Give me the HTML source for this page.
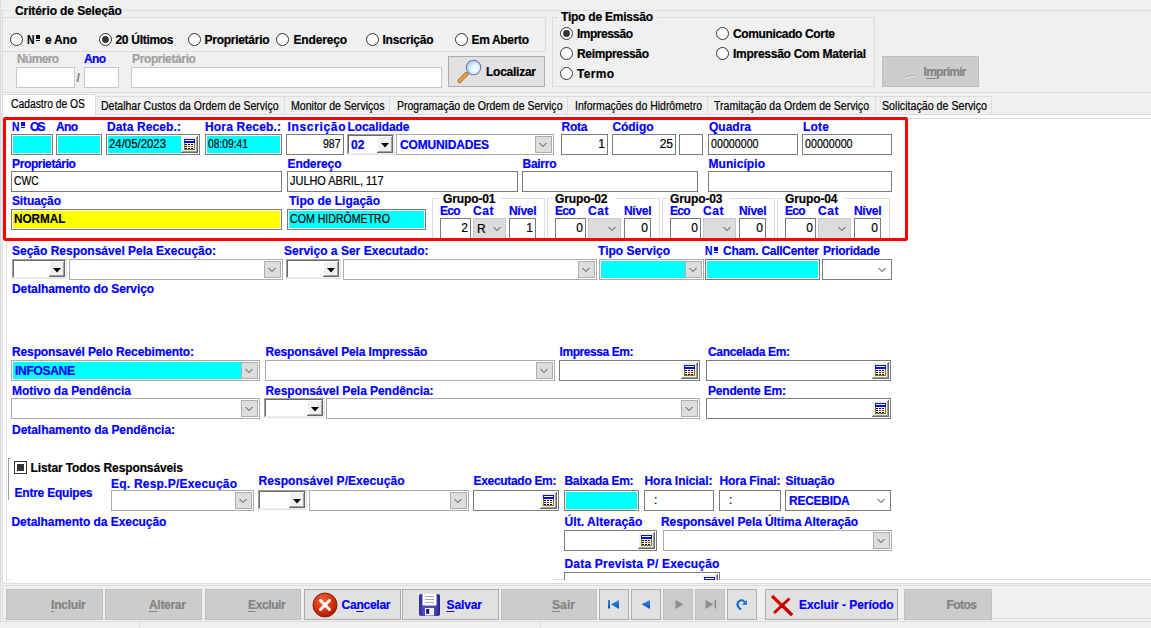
<!DOCTYPE html>
<html><head><meta charset="utf-8"><style>
html,body{margin:0;padding:0;width:1151px;height:628px;overflow:hidden;background:#f0f0f0;}
.a{position:absolute;}
.t{white-space:pre;font-family:"Liberation Sans",sans-serif;-webkit-text-stroke:0.2px currentColor;}
u{text-decoration:underline;text-decoration-thickness:1px;text-underline-offset:1.5px;}
</style></head><body>
<div class="a" style="left:0px;top:0px;width:1151px;height:628px;background:#f0f0f0;"></div>
<div class="a" style="left:0px;top:0px;width:1px;height:622px;background:#dadada;"></div>
<div class="a" style="left:2px;top:10px;width:8px;height:1px;background:#dcdcdc;"></div>
<div class="a" style="left:124px;top:10px;width:1027px;height:1px;background:#dcdcdc;"></div>
<div class="a" style="left:2px;top:10px;width:1px;height:83px;background:#dcdcdc;"></div>
<div class="a" style="left:2px;top:92px;width:1149px;height:1px;background:#dcdcdc;"></div>
<div class="a t" style="left:15px;top:5.03px;font:bold 12px 'Liberation Sans';line-height:12px;color:#000;letter-spacing:-0.1px;">Critério de Seleção</div>
<div class="a" style="left:2px;top:17px;width:544px;height:1px;background:#dcdcdc;"></div>
<div class="a" style="left:545px;top:17px;width:1px;height:35px;background:#dcdcdc;"></div>
<div class="a" style="left:2px;top:51px;width:544px;height:1px;background:#dcdcdc;"></div>
<svg class="a" style="left:10px;top:33px" width="13" height="13" viewBox="0 0 13 13"><circle cx="6.5" cy="6.5" r="6" fill="#fff" stroke="#333" stroke-width="1"/></svg>
<div class="a t" style="left:26.5px;top:34.03px;font:bold 12px 'Liberation Sans';line-height:12px;color:#000;transform:scaleX(0.8649);transform-origin:0 0;">N</div>
<div class="a" style="left:36px;top:35px;width:4px;height:4px;background:#000;"></div>
<div class="a" style="left:36px;top:40px;width:4px;height:1px;background:#000;"></div>
<div class="a t" style="left:45px;top:34.03px;font:bold 12px 'Liberation Sans';line-height:12px;color:#000;letter-spacing:-0.22px;">e Ano</div>
<svg class="a" style="left:99px;top:33px" width="13" height="13" viewBox="0 0 13 13"><circle cx="6.5" cy="6.5" r="6" fill="#fff" stroke="#333" stroke-width="1"/><circle cx="6.5" cy="6.5" r="3.4" fill="#333"/></svg>
<div class="a t" style="left:115.5px;top:34.03px;font:bold 12px 'Liberation Sans';line-height:12px;color:#000;letter-spacing:-0.3px;">20 Últimos</div>
<svg class="a" style="left:187.5px;top:33px" width="13" height="13" viewBox="0 0 13 13"><circle cx="6.5" cy="6.5" r="6" fill="#fff" stroke="#333" stroke-width="1"/></svg>
<div class="a t" style="left:204.5px;top:34.03px;font:bold 12px 'Liberation Sans';line-height:12px;color:#000;letter-spacing:-0.27px;">Proprietário</div>
<svg class="a" style="left:276px;top:33px" width="13" height="13" viewBox="0 0 13 13"><circle cx="6.5" cy="6.5" r="6" fill="#fff" stroke="#333" stroke-width="1"/></svg>
<div class="a t" style="left:293.5px;top:34.03px;font:bold 12px 'Liberation Sans';line-height:12px;color:#000;letter-spacing:-0.17px;">Endereço</div>
<svg class="a" style="left:366px;top:33px" width="13" height="13" viewBox="0 0 13 13"><circle cx="6.5" cy="6.5" r="6" fill="#fff" stroke="#333" stroke-width="1"/></svg>
<div class="a t" style="left:382.5px;top:34.03px;font:bold 12px 'Liberation Sans';line-height:12px;color:#000;letter-spacing:-0.21px;">Inscrição</div>
<svg class="a" style="left:455px;top:33px" width="13" height="13" viewBox="0 0 13 13"><circle cx="6.5" cy="6.5" r="6" fill="#fff" stroke="#333" stroke-width="1"/></svg>
<div class="a t" style="left:471.5px;top:34.03px;font:bold 12px 'Liberation Sans';line-height:12px;color:#000;letter-spacing:-0.34px;">Em Aberto</div>
<div class="a t" style="left:17px;top:53.03px;font:bold 12px 'Liberation Sans';line-height:12px;color:#a0a0a0;letter-spacing:-0.67px;">Número</div>
<div class="a t" style="left:84px;top:53.03px;font:bold 12px 'Liberation Sans';line-height:12px;color:#0000ff;letter-spacing:-0.66px;">Ano</div>
<div class="a t" style="left:132px;top:53.03px;font:bold 12px 'Liberation Sans';line-height:12px;color:#a0a0a0;letter-spacing:-0.37px;">Proprietário</div>
<div class="a" style="left:16px;top:67px;width:59px;height:21px;background:#c8c8c8;"></div>
<div class="a" style="left:17px;top:68px;width:57px;height:19px;background:#fff;"></div>
<div class="a" style="left:18px;top:69px;width:55px;height:17px;background:#fff;"></div>
<div class="a" style="left:84px;top:67px;width:35px;height:21px;background:#c8c8c8;"></div>
<div class="a" style="left:85px;top:68px;width:33px;height:19px;background:#fff;"></div>
<div class="a" style="left:86px;top:69px;width:31px;height:17px;background:#fff;"></div>
<div class="a" style="left:131px;top:67px;width:311px;height:21px;background:#c8c8c8;"></div>
<div class="a" style="left:132px;top:68px;width:309px;height:19px;background:#fff;"></div>
<div class="a" style="left:133px;top:69px;width:307px;height:17px;background:#fff;"></div>
<div class="a t" style="left:76.5px;top:71.53px;font:bold 12px 'Liberation Sans';line-height:12px;color:#808080;">/</div>
<div class="a" style="left:448px;top:56px;width:97px;height:31px;background:#adadad;"></div>
<div class="a" style="left:449px;top:57px;width:95px;height:29px;background:#e1e1e1;"></div>
<svg class="a" style="left:456px;top:59px" width="28" height="26" viewBox="0 0 28 26">
<defs><radialGradient id="lens" cx="0.62" cy="0.6" r="0.75"><stop offset="0" stop-color="#ffffff"/><stop offset="0.45" stop-color="#d8f0ff"/><stop offset="1" stop-color="#88c0f0"/></radialGradient></defs>
<path d="M3.5 22 L10.5 15" stroke="#8a6a50" stroke-width="4.2" stroke-linecap="round"/>
<path d="M3.5 22 L10.5 15" stroke="#f0a030" stroke-width="2.8" stroke-linecap="round"/>
<circle cx="17.5" cy="8.5" r="7.2" fill="url(#lens)" stroke="#7878b8" stroke-width="1.1"/>
</svg>
<div class="a t" style="left:486px;top:66.03px;font:bold 12px 'Liberation Sans';line-height:12px;color:#000;letter-spacing:-0.25px;">Localizar</div>
<div class="a" style="left:552px;top:17px;width:6px;height:1px;background:#dcdcdc;"></div>
<div class="a" style="left:657px;top:17px;width:218px;height:1px;background:#dcdcdc;"></div>
<div class="a" style="left:552px;top:17px;width:1px;height:70px;background:#dcdcdc;"></div>
<div class="a" style="left:874px;top:17px;width:1px;height:70px;background:#dcdcdc;"></div>
<div class="a" style="left:552px;top:86px;width:323px;height:1px;background:#dcdcdc;"></div>
<div class="a t" style="left:561px;top:11.03px;font:bold 12px 'Liberation Sans';line-height:12px;color:#000;letter-spacing:-0.22px;">Tipo de Emissão</div>
<svg class="a" style="left:560px;top:27.2px" width="13" height="13" viewBox="0 0 13 13"><circle cx="6.5" cy="6.5" r="6" fill="#fff" stroke="#333" stroke-width="1"/><circle cx="6.5" cy="6.5" r="3.4" fill="#333"/></svg>
<div class="a t" style="left:577px;top:28.03px;font:bold 12px 'Liberation Sans';line-height:12px;color:#000;letter-spacing:-0.5px;">Impressão</div>
<svg class="a" style="left:560px;top:47.2px" width="13" height="13" viewBox="0 0 13 13"><circle cx="6.5" cy="6.5" r="6" fill="#fff" stroke="#333" stroke-width="1"/></svg>
<div class="a t" style="left:577px;top:48.03px;font:bold 12px 'Liberation Sans';line-height:12px;color:#000;letter-spacing:-0.34px;">Reimpressão</div>
<svg class="a" style="left:560px;top:67px" width="13" height="13" viewBox="0 0 13 13"><circle cx="6.5" cy="6.5" r="6" fill="#fff" stroke="#333" stroke-width="1"/></svg>
<div class="a t" style="left:577px;top:68.03px;font:bold 12px 'Liberation Sans';line-height:12px;color:#000;letter-spacing:0.3px;">Termo</div>
<svg class="a" style="left:716px;top:27.2px" width="13" height="13" viewBox="0 0 13 13"><circle cx="6.5" cy="6.5" r="6" fill="#fff" stroke="#333" stroke-width="1"/></svg>
<div class="a t" style="left:733px;top:28.03px;font:bold 12px 'Liberation Sans';line-height:12px;color:#000;letter-spacing:-0.36px;">Comunicado Corte</div>
<svg class="a" style="left:716px;top:47.2px" width="13" height="13" viewBox="0 0 13 13"><circle cx="6.5" cy="6.5" r="6" fill="#fff" stroke="#333" stroke-width="1"/></svg>
<div class="a t" style="left:733px;top:48.03px;font:bold 12px 'Liberation Sans';line-height:12px;color:#000;letter-spacing:-0.27px;">Impressão Com Material</div>
<div class="a" style="left:882px;top:56px;width:97px;height:31px;background:#bfbfbf;"></div>
<div class="a" style="left:883px;top:57px;width:95px;height:29px;background:#cccccc;"></div>
<svg class="a" style="left:905px;top:75px" width="10" height="4" viewBox="0 0 10 4"><path d="M0 3 L9 1" stroke="#fff" stroke-width="1.2"/><path d="M0 2.2 L9 0.2" stroke="#9a9a9a" stroke-width="0.8"/></svg>
<div class="a t" style="left:923.5px;top:66.03px;font:bold 12px 'Liberation Sans';line-height:12px;color:#838383;letter-spacing:-0.72px;">I<u>m</u>primir</div>
<div class="a" style="left:0px;top:114px;width:1151px;height:1px;background:#dcdcdc;"></div>
<div class="a" style="left:95px;top:96px;width:190px;height:19px;background:#dcdcdc;"></div>
<div class="a" style="left:96px;top:97px;width:188px;height:17px;background:#f0f0f0;"></div>
<div class="a t" style="left:100.5px;top:100.03px;font:12px 'Liberation Sans';line-height:12px;color:#000;transform:scaleX(0.8754);transform-origin:0 0;">Detalhar Custos da Ordem de Serviço</div>
<div class="a" style="left:284px;top:96px;width:106px;height:19px;background:#dcdcdc;"></div>
<div class="a" style="left:285px;top:97px;width:104px;height:17px;background:#f0f0f0;"></div>
<div class="a t" style="left:290.5px;top:100.03px;font:12px 'Liberation Sans';line-height:12px;color:#000;transform:scaleX(0.8817);transform-origin:0 0;">Monitor de Serviços</div>
<div class="a" style="left:389px;top:96px;width:179px;height:19px;background:#dcdcdc;"></div>
<div class="a" style="left:390px;top:97px;width:177px;height:17px;background:#f0f0f0;"></div>
<div class="a t" style="left:396.5px;top:100.03px;font:12px 'Liberation Sans';line-height:12px;color:#000;transform:scaleX(0.8767);transform-origin:0 0;">Programação de Ordem de Serviço</div>
<div class="a" style="left:567px;top:96px;width:141px;height:19px;background:#dcdcdc;"></div>
<div class="a" style="left:568px;top:97px;width:139px;height:17px;background:#f0f0f0;"></div>
<div class="a t" style="left:574.5px;top:100.03px;font:12px 'Liberation Sans';line-height:12px;color:#000;transform:scaleX(0.8734);transform-origin:0 0;">Informações do Hidrômetro</div>
<div class="a" style="left:707px;top:96px;width:169px;height:19px;background:#dcdcdc;"></div>
<div class="a" style="left:708px;top:97px;width:167px;height:17px;background:#f0f0f0;"></div>
<div class="a t" style="left:714px;top:100.03px;font:12px 'Liberation Sans';line-height:12px;color:#000;transform:scaleX(0.8792);transform-origin:0 0;">Tramitação da Ordem de Serviço</div>
<div class="a" style="left:875px;top:96px;width:117px;height:19px;background:#dcdcdc;"></div>
<div class="a" style="left:876px;top:97px;width:115px;height:17px;background:#f0f0f0;"></div>
<div class="a t" style="left:881.5px;top:100.03px;font:12px 'Liberation Sans';line-height:12px;color:#000;transform:scaleX(0.8894);transform-origin:0 0;">Solicitação de Serviço</div>
<div class="a" style="left:2px;top:114px;width:1149px;height:470px;background:#dcdcdc;"></div>
<div class="a" style="left:3px;top:115px;width:1148px;height:468px;background:#fff;"></div>
<div class="a" style="left:3px;top:118px;width:1148px;height:1px;background:#dcdcdc;"></div>
<div class="a" style="left:2px;top:94px;width:94px;height:22px;background:#dcdcdc;"></div>
<div class="a" style="left:3px;top:95px;width:92px;height:23px;background:#fff;"></div>
<div class="a t" style="left:10.5px;top:97.53px;font:12px 'Liberation Sans';line-height:12px;color:#000;transform:scaleX(0.8600);transform-origin:0 0;">Cadastro de OS</div>
<div class="a" style="left:3px;top:117px;width:905px;height:124px;box-sizing:border-box;border:3px solid #ff0000;border-radius:3px;"></div>
<div class="a t" style="left:11.5px;top:121.03px;font:bold 12px 'Liberation Sans';line-height:12px;color:#0000ff;transform:scaleX(0.8649);transform-origin:0 0;">N</div>
<div class="a" style="left:21px;top:122px;width:4px;height:4px;background:#0000ff;"></div>
<div class="a" style="left:21px;top:127px;width:4px;height:1px;background:#0000ff;"></div>
<div class="a t" style="left:30px;top:121.03px;font:bold 12px 'Liberation Sans';line-height:12px;color:#0000ff;letter-spacing:-1.84px;">OS</div>
<div class="a t" style="left:56px;top:121.03px;font:bold 12px 'Liberation Sans';line-height:12px;color:#0000ff;letter-spacing:-0.66px;">Ano</div>
<div class="a t" style="left:107px;top:121.03px;font:bold 12px 'Liberation Sans';line-height:12px;color:#0000ff;letter-spacing:0.12px;">Data Receb.:</div>
<div class="a t" style="left:205px;top:121.03px;font:bold 12px 'Liberation Sans';line-height:12px;color:#0000ff;letter-spacing:0.18px;">Hora Receb.:</div>
<div class="a t" style="left:287.5px;top:121.03px;font:bold 12px 'Liberation Sans';line-height:12px;color:#0000ff;letter-spacing:0.66px;">Inscrição</div>
<div class="a t" style="left:347.5px;top:121.03px;font:bold 12px 'Liberation Sans';line-height:12px;color:#0000ff;letter-spacing:-0.08px;">Localidade</div>
<div class="a t" style="left:561.5px;top:121.03px;font:bold 12px 'Liberation Sans';line-height:12px;color:#0000ff;letter-spacing:-0.22px;">Rota</div>
<div class="a t" style="left:612.5px;top:121.03px;font:bold 12px 'Liberation Sans';line-height:12px;color:#0000ff;letter-spacing:-0.07px;">Código</div>
<div class="a t" style="left:709px;top:121.03px;font:bold 12px 'Liberation Sans';line-height:12px;color:#0000ff;">Quadra</div>
<div class="a t" style="left:803px;top:121.03px;font:bold 12px 'Liberation Sans';line-height:12px;color:#0000ff;letter-spacing:0.22px;">Lote</div>
<div class="a" style="left:11px;top:134px;width:42px;height:21px;background:#7a7a7a;"></div>
<div class="a" style="left:12px;top:135px;width:40px;height:19px;background:#fff;"></div>
<div class="a" style="left:13px;top:136px;width:38px;height:17px;background:#00ffff;"></div>
<div class="a" style="left:56px;top:134px;width:46px;height:21px;background:#7a7a7a;"></div>
<div class="a" style="left:57px;top:135px;width:44px;height:19px;background:#fff;"></div>
<div class="a" style="left:58px;top:136px;width:42px;height:17px;background:#00ffff;"></div>
<div class="a" style="left:106px;top:134px;width:94px;height:21px;background:#7a7a7a;"></div>
<div class="a" style="left:107px;top:135px;width:92px;height:19px;background:#fff;"></div>
<div class="a" style="left:108px;top:136px;width:90px;height:17px;background:#00ffff;"></div>
<div class="a t" style="left:109px;top:138.03px;font:12px 'Liberation Sans';line-height:12px;color:#000;transform:scaleX(0.9490);transform-origin:0 0;">24/05/2023</div>
<div class="a" style="left:181px;top:136px;width:17px;height:17px;background:#696969;"></div>
<div class="a" style="left:181px;top:136px;width:16px;height:16px;background:#fff;"></div>
<div class="a" style="left:182px;top:137px;width:15px;height:15px;background:#a0a0a0;"></div>
<div class="a" style="left:182px;top:137px;width:14px;height:14px;background:#f0f0f0;"></div>
<svg class="a" style="left:184px;top:139px" width="11" height="11" viewBox="0 0 11 11" shape-rendering="crispEdges">
<rect x="0" y="0" width="11" height="11" fill="#808000"/>
<rect x="0" y="0" width="11" height="4" fill="#0000ff"/>
<rect x="1" y="1" width="9" height="1" fill="#fff"/>
<rect x="1" y="4" width="9" height="6" fill="#fff"/>
<rect x="1" y="5" width="2" height="1" fill="#000"/><rect x="4" y="5" width="2" height="1" fill="#000"/><rect x="7" y="5" width="2" height="1" fill="#000"/>
<rect x="1" y="7" width="2" height="1" fill="#000"/><rect x="4" y="7" width="2" height="1" fill="#f00"/><rect x="7" y="7" width="2" height="1" fill="#f00"/>
<rect x="1" y="9" width="2" height="1" fill="#000"/><rect x="4" y="9" width="2" height="1" fill="#000"/><rect x="7" y="9" width="2" height="1" fill="#000"/>
</svg>
<div class="a" style="left:205px;top:134px;width:77px;height:21px;background:#7a7a7a;"></div>
<div class="a" style="left:206px;top:135px;width:75px;height:19px;background:#fff;"></div>
<div class="a" style="left:207px;top:136px;width:73px;height:17px;background:#00ffff;"></div>
<div class="a t" style="left:208px;top:138.03px;font:12px 'Liberation Sans';line-height:12px;color:#000;transform:scaleX(0.8562);transform-origin:0 0;">08:09:41</div>
<div class="a" style="left:286px;top:134px;width:58px;height:21px;background:#7a7a7a;"></div>
<div class="a" style="left:287px;top:135px;width:56px;height:19px;background:#fff;"></div>
<div class="a" style="left:288px;top:136px;width:54px;height:17px;background:#fff;"></div>
<div class="a t" style="left:323.4px;top:138.03px;font:12px 'Liberation Sans';line-height:12px;color:#000;transform:scaleX(0.8786);transform-origin:0 0;">987</div>
<div class="a" style="left:347px;top:134px;width:48px;height:21px;background:#e3e3e3;"></div>
<div class="a" style="left:347px;top:134px;width:47px;height:20px;background:#a0a0a0;"></div>
<div class="a" style="left:348px;top:135px;width:46px;height:19px;background:#f0f0f0;"></div>
<div class="a" style="left:348px;top:135px;width:45px;height:18px;background:#696969;"></div>
<div class="a" style="left:349px;top:136px;width:44px;height:17px;background:#fff;"></div>
<div class="a" style="left:377px;top:136px;width:16px;height:17px;background:#696969;"></div>
<div class="a" style="left:377px;top:136px;width:15px;height:16px;background:#fff;"></div>
<div class="a" style="left:378px;top:137px;width:14px;height:15px;background:#a0a0a0;"></div>
<div class="a" style="left:378px;top:137px;width:13px;height:14px;background:#f0f0f0;"></div>
<svg class="a" style="left:380.5px;top:143px" width="8" height="5" viewBox="0 0 8 5"><path d="M0 0 H8 L4 4.5 Z" fill="#000"/></svg>
<div class="a t" style="left:351px;top:139.03px;font:bold 12px 'Liberation Sans';line-height:12px;color:#0000ff;">02</div>
<div class="a" style="left:396px;top:134px;width:158px;height:21px;background:#ababab;"></div>
<div class="a" style="left:397px;top:135px;width:156px;height:19px;background:#fff;"></div>
<div class="a" style="left:398px;top:136px;width:154px;height:17px;background:#fff;"></div>
<div class="a" style="left:535px;top:136px;width:17px;height:17px;background:#adadad;"></div>
<div class="a" style="left:536px;top:137px;width:15px;height:15px;background:#dddddd;"></div>
<svg class="a" style="left:539px;top:142px" width="8" height="6" viewBox="0 0 8 6"><path d="M0.5 1 L4.0 4.5 L7.5 1" fill="none" stroke="#444" stroke-width="1"/></svg>
<div class="a t" style="left:400px;top:139.03px;font:bold 12px 'Liberation Sans';line-height:12px;color:#0000ff;letter-spacing:-0.17px;">COMUNIDADES</div>
<div class="a" style="left:561px;top:134px;width:47px;height:21px;background:#7a7a7a;"></div>
<div class="a" style="left:562px;top:135px;width:45px;height:19px;background:#fff;"></div>
<div class="a" style="left:563px;top:136px;width:43px;height:17px;background:#fff;"></div>
<div class="a t" style="left:598.31px;top:138.03px;font:12px 'Liberation Sans';line-height:12px;color:#000;">1</div>
<div class="a" style="left:612px;top:134px;width:64px;height:21px;background:#7a7a7a;"></div>
<div class="a" style="left:613px;top:135px;width:62px;height:19px;background:#fff;"></div>
<div class="a" style="left:614px;top:136px;width:60px;height:17px;background:#fff;"></div>
<div class="a t" style="left:659.64px;top:138.03px;font:12px 'Liberation Sans';line-height:12px;color:#000;">25</div>
<div class="a" style="left:679px;top:134px;width:24px;height:21px;background:#7a7a7a;"></div>
<div class="a" style="left:680px;top:135px;width:22px;height:19px;background:#fff;"></div>
<div class="a" style="left:681px;top:136px;width:20px;height:17px;background:#fff;"></div>
<div class="a" style="left:708px;top:134px;width:90px;height:21px;background:#7a7a7a;"></div>
<div class="a" style="left:709px;top:135px;width:88px;height:19px;background:#fff;"></div>
<div class="a" style="left:710px;top:136px;width:86px;height:17px;background:#fff;"></div>
<div class="a t" style="left:711px;top:138.03px;font:12px 'Liberation Sans';line-height:12px;color:#000;transform:scaleX(0.8897);transform-origin:0 0;">00000000</div>
<div class="a" style="left:802px;top:134px;width:90px;height:21px;background:#7a7a7a;"></div>
<div class="a" style="left:803px;top:135px;width:88px;height:19px;background:#fff;"></div>
<div class="a" style="left:804px;top:136px;width:86px;height:17px;background:#fff;"></div>
<div class="a t" style="left:805px;top:138.03px;font:12px 'Liberation Sans';line-height:12px;color:#000;transform:scaleX(0.8897);transform-origin:0 0;">00000000</div>
<div class="a t" style="left:12px;top:158.03px;font:bold 12px 'Liberation Sans';line-height:12px;color:#0000ff;letter-spacing:-0.37px;">Proprietário</div>
<div class="a t" style="left:287.5px;top:158.03px;font:bold 12px 'Liberation Sans';line-height:12px;color:#0000ff;letter-spacing:-0.1px;">Endereço</div>
<div class="a t" style="left:522.5px;top:158.03px;font:bold 12px 'Liberation Sans';line-height:12px;color:#0000ff;letter-spacing:-0.27px;">Bairro</div>
<div class="a t" style="left:708.5px;top:158.03px;font:bold 12px 'Liberation Sans';line-height:12px;color:#0000ff;letter-spacing:0.06px;">Município</div>
<div class="a" style="left:11px;top:171px;width:271px;height:21px;background:#7a7a7a;"></div>
<div class="a" style="left:12px;top:172px;width:269px;height:19px;background:#fff;"></div>
<div class="a" style="left:13px;top:173px;width:267px;height:17px;background:#fff;"></div>
<div class="a t" style="left:14px;top:175.03px;font:12px 'Liberation Sans';line-height:12px;color:#000;transform:scaleX(0.8632);transform-origin:0 0;">CWC</div>
<div class="a" style="left:287px;top:171px;width:231px;height:21px;background:#7a7a7a;"></div>
<div class="a" style="left:288px;top:172px;width:229px;height:19px;background:#fff;"></div>
<div class="a" style="left:289px;top:173px;width:227px;height:17px;background:#fff;"></div>
<div class="a t" style="left:290px;top:175.03px;font:12px 'Liberation Sans';line-height:12px;color:#000;transform:scaleX(0.9122);transform-origin:0 0;">JULHO ABRIL, 117</div>
<div class="a" style="left:522px;top:171px;width:176px;height:21px;background:#7a7a7a;"></div>
<div class="a" style="left:523px;top:172px;width:174px;height:19px;background:#fff;"></div>
<div class="a" style="left:524px;top:173px;width:172px;height:17px;background:#fff;"></div>
<div class="a" style="left:708px;top:171px;width:184px;height:21px;background:#7a7a7a;"></div>
<div class="a" style="left:709px;top:172px;width:182px;height:19px;background:#fff;"></div>
<div class="a" style="left:710px;top:173px;width:180px;height:17px;background:#fff;"></div>
<div class="a t" style="left:12px;top:195.03px;font:bold 12px 'Liberation Sans';line-height:12px;color:#0000ff;letter-spacing:-0.15px;">Situação</div>
<div class="a t" style="left:289px;top:195.03px;font:bold 12px 'Liberation Sans';line-height:12px;color:#0000ff;">Tipo de Ligação</div>
<div class="a" style="left:11px;top:209px;width:271px;height:21px;background:#7a7a7a;"></div>
<div class="a" style="left:12px;top:210px;width:269px;height:19px;background:#fff;"></div>
<div class="a" style="left:13px;top:211px;width:267px;height:17px;background:#ffff00;"></div>
<div class="a t" style="left:14px;top:213.03px;font:bold 12px 'Liberation Sans';line-height:12px;color:#000;transform:scaleX(0.9778);transform-origin:0 0;">NORMAL</div>
<div class="a" style="left:287px;top:209px;width:139px;height:21px;background:#7a7a7a;"></div>
<div class="a" style="left:288px;top:210px;width:137px;height:19px;background:#fff;"></div>
<div class="a" style="left:289px;top:211px;width:135px;height:17px;background:#00ffff;"></div>
<div class="a t" style="left:290px;top:213.03px;font:12px 'Liberation Sans';line-height:12px;color:#000;transform:scaleX(0.8824);transform-origin:0 0;">COM HIDRÔMETRO</div>
<div class="a" style="left:432px;top:198px;width:6px;height:1px;background:#dcdcdc;"></div>
<div class="a" style="left:500px;top:198px;width:45px;height:1px;background:#dcdcdc;"></div>
<div class="a" style="left:432px;top:198px;width:1px;height:43px;background:#dcdcdc;"></div>
<div class="a" style="left:544px;top:198px;width:1px;height:43px;background:#dcdcdc;"></div>
<div class="a" style="left:432px;top:240px;width:113px;height:1px;background:#dcdcdc;"></div>
<div class="a t" style="left:443px;top:193.03px;font:bold 12px 'Liberation Sans';line-height:12px;color:#000;letter-spacing:-0.12px;">Grupo-01</div>
<div class="a t" style="left:440px;top:205.03px;font:bold 12px 'Liberation Sans';line-height:12px;color:#0000ff;letter-spacing:-0.76px;">Eco</div>
<div class="a t" style="left:473px;top:205.03px;font:bold 12px 'Liberation Sans';line-height:12px;color:#0000ff;letter-spacing:0.58px;">Cat</div>
<div class="a t" style="left:509px;top:205.03px;font:bold 12px 'Liberation Sans';line-height:12px;color:#0000ff;letter-spacing:-0.3px;">Nível</div>
<div class="a" style="left:440px;top:218px;width:31px;height:21px;background:#7a7a7a;"></div>
<div class="a" style="left:441px;top:219px;width:29px;height:19px;background:#fff;"></div>
<div class="a" style="left:442px;top:220px;width:27px;height:17px;background:#fff;"></div>
<div class="a t" style="left:461.31px;top:222.03px;font:12px 'Liberation Sans';line-height:12px;color:#000;">2</div>
<div class="a" style="left:473px;top:218px;width:33px;height:21px;background:#c8c8c8;"></div>
<div class="a" style="left:474px;top:219px;width:31px;height:19px;background:#dcdcdc;"></div>
<div class="a" style="left:475px;top:220px;width:29px;height:17px;background:#dcdcdc;"></div>
<div class="a" style="left:487px;top:220px;width:17px;height:17px;background:#dcdcdc;"></div>
<div class="a" style="left:488px;top:221px;width:15px;height:15px;background:#dcdcdc;"></div>
<svg class="a" style="left:492.5px;top:226px" width="8" height="6" viewBox="0 0 8 6"><path d="M0.5 1 L4.0 4.5 L7.5 1" fill="none" stroke="#444" stroke-width="1"/></svg>
<div class="a t" style="left:477px;top:223.03px;font:12px 'Liberation Sans';line-height:12px;color:#000;">R</div>
<div class="a" style="left:509px;top:218px;width:27px;height:21px;background:#7a7a7a;"></div>
<div class="a" style="left:510px;top:219px;width:25px;height:19px;background:#fff;"></div>
<div class="a" style="left:511px;top:220px;width:23px;height:17px;background:#fff;"></div>
<div class="a t" style="left:526.31px;top:222.03px;font:12px 'Liberation Sans';line-height:12px;color:#000;">1</div>
<div class="a" style="left:547px;top:198px;width:6px;height:1px;background:#dcdcdc;"></div>
<div class="a" style="left:615px;top:198px;width:45px;height:1px;background:#dcdcdc;"></div>
<div class="a" style="left:547px;top:198px;width:1px;height:43px;background:#dcdcdc;"></div>
<div class="a" style="left:659px;top:198px;width:1px;height:43px;background:#dcdcdc;"></div>
<div class="a" style="left:547px;top:240px;width:113px;height:1px;background:#dcdcdc;"></div>
<div class="a t" style="left:555px;top:193.03px;font:bold 12px 'Liberation Sans';line-height:12px;color:#000;letter-spacing:-0.12px;">Grupo-02</div>
<div class="a t" style="left:555px;top:205.03px;font:bold 12px 'Liberation Sans';line-height:12px;color:#0000ff;letter-spacing:-0.76px;">Eco</div>
<div class="a t" style="left:588px;top:205.03px;font:bold 12px 'Liberation Sans';line-height:12px;color:#0000ff;letter-spacing:0.58px;">Cat</div>
<div class="a t" style="left:624px;top:205.03px;font:bold 12px 'Liberation Sans';line-height:12px;color:#0000ff;letter-spacing:-0.3px;">Nível</div>
<div class="a" style="left:555px;top:218px;width:31px;height:21px;background:#7a7a7a;"></div>
<div class="a" style="left:556px;top:219px;width:29px;height:19px;background:#fff;"></div>
<div class="a" style="left:557px;top:220px;width:27px;height:17px;background:#fff;"></div>
<div class="a t" style="left:576.31px;top:222.03px;font:12px 'Liberation Sans';line-height:12px;color:#000;">0</div>
<div class="a" style="left:588px;top:218px;width:33px;height:21px;background:#c8c8c8;"></div>
<div class="a" style="left:589px;top:219px;width:31px;height:19px;background:#dcdcdc;"></div>
<div class="a" style="left:590px;top:220px;width:29px;height:17px;background:#dcdcdc;"></div>
<div class="a" style="left:602px;top:220px;width:17px;height:17px;background:#dcdcdc;"></div>
<div class="a" style="left:603px;top:221px;width:15px;height:15px;background:#dcdcdc;"></div>
<svg class="a" style="left:607.5px;top:226px" width="8" height="6" viewBox="0 0 8 6"><path d="M0.5 1 L4.0 4.5 L7.5 1" fill="none" stroke="#444" stroke-width="1"/></svg>
<div class="a" style="left:624px;top:218px;width:27px;height:21px;background:#7a7a7a;"></div>
<div class="a" style="left:625px;top:219px;width:25px;height:19px;background:#fff;"></div>
<div class="a" style="left:626px;top:220px;width:23px;height:17px;background:#fff;"></div>
<div class="a t" style="left:641.31px;top:222.03px;font:12px 'Liberation Sans';line-height:12px;color:#000;">0</div>
<div class="a" style="left:662px;top:198px;width:6px;height:1px;background:#dcdcdc;"></div>
<div class="a" style="left:730px;top:198px;width:45px;height:1px;background:#dcdcdc;"></div>
<div class="a" style="left:662px;top:198px;width:1px;height:43px;background:#dcdcdc;"></div>
<div class="a" style="left:774px;top:198px;width:1px;height:43px;background:#dcdcdc;"></div>
<div class="a" style="left:662px;top:240px;width:113px;height:1px;background:#dcdcdc;"></div>
<div class="a t" style="left:670px;top:193.03px;font:bold 12px 'Liberation Sans';line-height:12px;color:#000;letter-spacing:-0.12px;">Grupo-03</div>
<div class="a t" style="left:670px;top:205.03px;font:bold 12px 'Liberation Sans';line-height:12px;color:#0000ff;letter-spacing:-0.76px;">Eco</div>
<div class="a t" style="left:703px;top:205.03px;font:bold 12px 'Liberation Sans';line-height:12px;color:#0000ff;letter-spacing:0.58px;">Cat</div>
<div class="a t" style="left:739px;top:205.03px;font:bold 12px 'Liberation Sans';line-height:12px;color:#0000ff;letter-spacing:-0.3px;">Nível</div>
<div class="a" style="left:670px;top:218px;width:31px;height:21px;background:#7a7a7a;"></div>
<div class="a" style="left:671px;top:219px;width:29px;height:19px;background:#fff;"></div>
<div class="a" style="left:672px;top:220px;width:27px;height:17px;background:#fff;"></div>
<div class="a t" style="left:691.31px;top:222.03px;font:12px 'Liberation Sans';line-height:12px;color:#000;">0</div>
<div class="a" style="left:703px;top:218px;width:33px;height:21px;background:#c8c8c8;"></div>
<div class="a" style="left:704px;top:219px;width:31px;height:19px;background:#dcdcdc;"></div>
<div class="a" style="left:705px;top:220px;width:29px;height:17px;background:#dcdcdc;"></div>
<div class="a" style="left:717px;top:220px;width:17px;height:17px;background:#dcdcdc;"></div>
<div class="a" style="left:718px;top:221px;width:15px;height:15px;background:#dcdcdc;"></div>
<svg class="a" style="left:722.5px;top:226px" width="8" height="6" viewBox="0 0 8 6"><path d="M0.5 1 L4.0 4.5 L7.5 1" fill="none" stroke="#444" stroke-width="1"/></svg>
<div class="a" style="left:739px;top:218px;width:27px;height:21px;background:#7a7a7a;"></div>
<div class="a" style="left:740px;top:219px;width:25px;height:19px;background:#fff;"></div>
<div class="a" style="left:741px;top:220px;width:23px;height:17px;background:#fff;"></div>
<div class="a t" style="left:756.31px;top:222.03px;font:12px 'Liberation Sans';line-height:12px;color:#000;">0</div>
<div class="a" style="left:777px;top:198px;width:6px;height:1px;background:#dcdcdc;"></div>
<div class="a" style="left:845px;top:198px;width:45px;height:1px;background:#dcdcdc;"></div>
<div class="a" style="left:777px;top:198px;width:1px;height:43px;background:#dcdcdc;"></div>
<div class="a" style="left:889px;top:198px;width:1px;height:43px;background:#dcdcdc;"></div>
<div class="a" style="left:777px;top:240px;width:113px;height:1px;background:#dcdcdc;"></div>
<div class="a t" style="left:785px;top:193.03px;font:bold 12px 'Liberation Sans';line-height:12px;color:#000;letter-spacing:-0.12px;">Grupo-04</div>
<div class="a t" style="left:785px;top:205.03px;font:bold 12px 'Liberation Sans';line-height:12px;color:#0000ff;letter-spacing:-0.76px;">Eco</div>
<div class="a t" style="left:818px;top:205.03px;font:bold 12px 'Liberation Sans';line-height:12px;color:#0000ff;letter-spacing:0.58px;">Cat</div>
<div class="a t" style="left:854px;top:205.03px;font:bold 12px 'Liberation Sans';line-height:12px;color:#0000ff;letter-spacing:-0.3px;">Nível</div>
<div class="a" style="left:785px;top:218px;width:31px;height:21px;background:#7a7a7a;"></div>
<div class="a" style="left:786px;top:219px;width:29px;height:19px;background:#fff;"></div>
<div class="a" style="left:787px;top:220px;width:27px;height:17px;background:#fff;"></div>
<div class="a t" style="left:806.31px;top:222.03px;font:12px 'Liberation Sans';line-height:12px;color:#000;">0</div>
<div class="a" style="left:818px;top:218px;width:33px;height:21px;background:#c8c8c8;"></div>
<div class="a" style="left:819px;top:219px;width:31px;height:19px;background:#dcdcdc;"></div>
<div class="a" style="left:820px;top:220px;width:29px;height:17px;background:#dcdcdc;"></div>
<div class="a" style="left:832px;top:220px;width:17px;height:17px;background:#dcdcdc;"></div>
<div class="a" style="left:833px;top:221px;width:15px;height:15px;background:#dcdcdc;"></div>
<svg class="a" style="left:837.5px;top:226px" width="8" height="6" viewBox="0 0 8 6"><path d="M0.5 1 L4.0 4.5 L7.5 1" fill="none" stroke="#444" stroke-width="1"/></svg>
<div class="a" style="left:854px;top:218px;width:27px;height:21px;background:#7a7a7a;"></div>
<div class="a" style="left:855px;top:219px;width:25px;height:19px;background:#fff;"></div>
<div class="a" style="left:856px;top:220px;width:23px;height:17px;background:#fff;"></div>
<div class="a t" style="left:871.31px;top:222.03px;font:12px 'Liberation Sans';line-height:12px;color:#000;">0</div>
<div class="a" style="left:3px;top:241px;width:1148px;height:5px;background:#fff;"></div>
<div class="a" style="left:3px;top:117px;width:905px;height:124px;box-sizing:border-box;border:3px solid #ff0000;border-radius:3px;"></div>
<div class="a t" style="left:12px;top:245.03px;font:bold 12px 'Liberation Sans';line-height:12px;color:#0000ff;">Seção Responsável Pela Execução:</div>
<div class="a t" style="left:284px;top:245.03px;font:bold 12px 'Liberation Sans';line-height:12px;color:#0000ff;letter-spacing:0.02px;">Serviço a Ser Executado:</div>
<div class="a t" style="left:598px;top:245.03px;font:bold 12px 'Liberation Sans';line-height:12px;color:#0000ff;letter-spacing:0.02px;">Tipo Serviço</div>
<div class="a t" style="left:704.5px;top:245.03px;font:bold 12px 'Liberation Sans';line-height:12px;color:#0000ff;transform:scaleX(0.8649);transform-origin:0 0;">N</div>
<div class="a" style="left:714px;top:247px;width:4px;height:4px;background:#0000ff;"></div>
<div class="a" style="left:714px;top:252px;width:4px;height:1px;background:#0000ff;"></div>
<div class="a t" style="left:723px;top:245.03px;font:bold 12px 'Liberation Sans';line-height:12px;color:#0000ff;letter-spacing:-0.27px;">Cham. CallCenter</div>
<div class="a t" style="left:823px;top:245.03px;font:bold 12px 'Liberation Sans';line-height:12px;color:#0000ff;letter-spacing:-0.26px;">Prioridade</div>
<div class="a" style="left:12px;top:259px;width:55px;height:20px;background:#e3e3e3;"></div>
<div class="a" style="left:12px;top:259px;width:54px;height:19px;background:#a0a0a0;"></div>
<div class="a" style="left:13px;top:260px;width:53px;height:18px;background:#f0f0f0;"></div>
<div class="a" style="left:13px;top:260px;width:52px;height:17px;background:#696969;"></div>
<div class="a" style="left:14px;top:261px;width:51px;height:16px;background:#fff;"></div>
<div class="a" style="left:49px;top:261px;width:16px;height:16px;background:#696969;"></div>
<div class="a" style="left:49px;top:261px;width:15px;height:15px;background:#fff;"></div>
<div class="a" style="left:50px;top:262px;width:14px;height:14px;background:#a0a0a0;"></div>
<div class="a" style="left:50px;top:262px;width:13px;height:13px;background:#f0f0f0;"></div>
<svg class="a" style="left:52.5px;top:268px" width="8" height="5" viewBox="0 0 8 5"><path d="M0 0 H8 L4 4.5 Z" fill="#000"/></svg>
<div class="a" style="left:69px;top:259px;width:214px;height:21px;background:#ababab;"></div>
<div class="a" style="left:70px;top:260px;width:212px;height:19px;background:#fff;"></div>
<div class="a" style="left:71px;top:261px;width:210px;height:17px;background:#fff;"></div>
<div class="a" style="left:264px;top:261px;width:17px;height:17px;background:#adadad;"></div>
<div class="a" style="left:265px;top:262px;width:15px;height:15px;background:#dddddd;"></div>
<svg class="a" style="left:268px;top:267px" width="8" height="6" viewBox="0 0 8 6"><path d="M0.5 1 L4.0 4.5 L7.5 1" fill="none" stroke="#444" stroke-width="1"/></svg>
<div class="a" style="left:286px;top:259px;width:55px;height:20px;background:#e3e3e3;"></div>
<div class="a" style="left:286px;top:259px;width:54px;height:19px;background:#a0a0a0;"></div>
<div class="a" style="left:287px;top:260px;width:53px;height:18px;background:#f0f0f0;"></div>
<div class="a" style="left:287px;top:260px;width:52px;height:17px;background:#696969;"></div>
<div class="a" style="left:288px;top:261px;width:51px;height:16px;background:#fff;"></div>
<div class="a" style="left:323px;top:261px;width:16px;height:16px;background:#696969;"></div>
<div class="a" style="left:323px;top:261px;width:15px;height:15px;background:#fff;"></div>
<div class="a" style="left:324px;top:262px;width:14px;height:14px;background:#a0a0a0;"></div>
<div class="a" style="left:324px;top:262px;width:13px;height:13px;background:#f0f0f0;"></div>
<svg class="a" style="left:326.5px;top:268px" width="8" height="5" viewBox="0 0 8 5"><path d="M0 0 H8 L4 4.5 Z" fill="#000"/></svg>
<div class="a" style="left:343px;top:259px;width:254px;height:21px;background:#ababab;"></div>
<div class="a" style="left:344px;top:260px;width:252px;height:19px;background:#fff;"></div>
<div class="a" style="left:345px;top:261px;width:250px;height:17px;background:#fff;"></div>
<div class="a" style="left:578px;top:261px;width:17px;height:17px;background:#adadad;"></div>
<div class="a" style="left:579px;top:262px;width:15px;height:15px;background:#dddddd;"></div>
<svg class="a" style="left:582px;top:267px" width="8" height="6" viewBox="0 0 8 6"><path d="M0.5 1 L4.0 4.5 L7.5 1" fill="none" stroke="#444" stroke-width="1"/></svg>
<div class="a" style="left:599px;top:259px;width:105px;height:21px;background:#ababab;"></div>
<div class="a" style="left:600px;top:260px;width:103px;height:19px;background:#fff;"></div>
<div class="a" style="left:601px;top:261px;width:101px;height:17px;background:#00ffff;"></div>
<div class="a" style="left:685px;top:261px;width:17px;height:17px;background:#adadad;"></div>
<div class="a" style="left:686px;top:262px;width:15px;height:15px;background:#dddddd;"></div>
<svg class="a" style="left:689px;top:267px" width="8" height="6" viewBox="0 0 8 6"><path d="M0.5 1 L4.0 4.5 L7.5 1" fill="none" stroke="#444" stroke-width="1"/></svg>
<div class="a" style="left:705px;top:259px;width:115px;height:21px;background:#7a7a7a;"></div>
<div class="a" style="left:706px;top:260px;width:113px;height:19px;background:#fff;"></div>
<div class="a" style="left:707px;top:261px;width:111px;height:17px;background:#00ffff;"></div>
<div class="a" style="left:822px;top:259px;width:70px;height:21px;background:#7a7a7a;"></div>
<div class="a" style="left:823px;top:260px;width:68px;height:19px;background:#fff;"></div>
<svg class="a" style="left:878px;top:266.5px" width="8" height="6" viewBox="0 0 8 6"><path d="M0.5 1 L4.0 4.5 L7.5 1" fill="none" stroke="#333" stroke-width="1"/></svg>
<div class="a t" style="left:12px;top:283.03px;font:bold 12px 'Liberation Sans';line-height:12px;color:#0000ff;letter-spacing:-0.09px;">Detalhamento do Serviço</div>
<div class="a t" style="left:12px;top:346.03px;font:bold 12px 'Liberation Sans';line-height:12px;color:#0000ff;letter-spacing:-0.12px;">Responsavél Pelo Recebimento:</div>
<div class="a t" style="left:265.5px;top:346.03px;font:bold 12px 'Liberation Sans';line-height:12px;color:#0000ff;letter-spacing:-0.14px;">Responsável Pela Impressão</div>
<div class="a t" style="left:559.5px;top:346.03px;font:bold 12px 'Liberation Sans';line-height:12px;color:#0000ff;letter-spacing:-0.43px;">Impressa Em:</div>
<div class="a t" style="left:708px;top:346.03px;font:bold 12px 'Liberation Sans';line-height:12px;color:#0000ff;letter-spacing:-0.34px;">Cancelada Em:</div>
<div class="a" style="left:11px;top:360px;width:249px;height:21px;background:#ababab;"></div>
<div class="a" style="left:12px;top:361px;width:247px;height:19px;background:#fff;"></div>
<div class="a" style="left:13px;top:362px;width:245px;height:17px;background:#00ffff;"></div>
<div class="a" style="left:241px;top:362px;width:17px;height:17px;background:#adadad;"></div>
<div class="a" style="left:242px;top:363px;width:15px;height:15px;background:#dddddd;"></div>
<svg class="a" style="left:245px;top:368px" width="8" height="6" viewBox="0 0 8 6"><path d="M0.5 1 L4.0 4.5 L7.5 1" fill="none" stroke="#444" stroke-width="1"/></svg>
<div class="a t" style="left:15px;top:365.03px;font:bold 12px 'Liberation Sans';line-height:12px;color:#0000ff;letter-spacing:-0.29px;">INFOSANE</div>
<div class="a" style="left:265px;top:360px;width:290px;height:21px;background:#ababab;"></div>
<div class="a" style="left:266px;top:361px;width:288px;height:19px;background:#fff;"></div>
<div class="a" style="left:267px;top:362px;width:286px;height:17px;background:#fff;"></div>
<div class="a" style="left:536px;top:362px;width:17px;height:17px;background:#adadad;"></div>
<div class="a" style="left:537px;top:363px;width:15px;height:15px;background:#dddddd;"></div>
<svg class="a" style="left:540px;top:368px" width="8" height="6" viewBox="0 0 8 6"><path d="M0.5 1 L4.0 4.5 L7.5 1" fill="none" stroke="#444" stroke-width="1"/></svg>
<div class="a" style="left:559px;top:360px;width:141px;height:21px;background:#7a7a7a;"></div>
<div class="a" style="left:560px;top:361px;width:139px;height:19px;background:#fff;"></div>
<div class="a" style="left:561px;top:362px;width:137px;height:17px;background:#fff;"></div>
<div class="a" style="left:681px;top:362px;width:17px;height:17px;background:#696969;"></div>
<div class="a" style="left:681px;top:362px;width:16px;height:16px;background:#fff;"></div>
<div class="a" style="left:682px;top:363px;width:15px;height:15px;background:#a0a0a0;"></div>
<div class="a" style="left:682px;top:363px;width:14px;height:14px;background:#f0f0f0;"></div>
<svg class="a" style="left:684px;top:365px" width="11" height="11" viewBox="0 0 11 11" shape-rendering="crispEdges">
<rect x="0" y="0" width="11" height="11" fill="#808000"/>
<rect x="0" y="0" width="11" height="4" fill="#0000ff"/>
<rect x="1" y="1" width="9" height="1" fill="#fff"/>
<rect x="1" y="4" width="9" height="6" fill="#fff"/>
<rect x="1" y="5" width="2" height="1" fill="#000"/><rect x="4" y="5" width="2" height="1" fill="#000"/><rect x="7" y="5" width="2" height="1" fill="#000"/>
<rect x="1" y="7" width="2" height="1" fill="#000"/><rect x="4" y="7" width="2" height="1" fill="#f00"/><rect x="7" y="7" width="2" height="1" fill="#f00"/>
<rect x="1" y="9" width="2" height="1" fill="#000"/><rect x="4" y="9" width="2" height="1" fill="#000"/><rect x="7" y="9" width="2" height="1" fill="#000"/>
</svg>
<div class="a" style="left:706px;top:360px;width:185px;height:21px;background:#7a7a7a;"></div>
<div class="a" style="left:707px;top:361px;width:183px;height:19px;background:#fff;"></div>
<div class="a" style="left:708px;top:362px;width:181px;height:17px;background:#fff;"></div>
<div class="a" style="left:872px;top:362px;width:17px;height:17px;background:#696969;"></div>
<div class="a" style="left:872px;top:362px;width:16px;height:16px;background:#fff;"></div>
<div class="a" style="left:873px;top:363px;width:15px;height:15px;background:#a0a0a0;"></div>
<div class="a" style="left:873px;top:363px;width:14px;height:14px;background:#f0f0f0;"></div>
<svg class="a" style="left:875px;top:365px" width="11" height="11" viewBox="0 0 11 11" shape-rendering="crispEdges">
<rect x="0" y="0" width="11" height="11" fill="#808000"/>
<rect x="0" y="0" width="11" height="4" fill="#0000ff"/>
<rect x="1" y="1" width="9" height="1" fill="#fff"/>
<rect x="1" y="4" width="9" height="6" fill="#fff"/>
<rect x="1" y="5" width="2" height="1" fill="#000"/><rect x="4" y="5" width="2" height="1" fill="#000"/><rect x="7" y="5" width="2" height="1" fill="#000"/>
<rect x="1" y="7" width="2" height="1" fill="#000"/><rect x="4" y="7" width="2" height="1" fill="#f00"/><rect x="7" y="7" width="2" height="1" fill="#f00"/>
<rect x="1" y="9" width="2" height="1" fill="#000"/><rect x="4" y="9" width="2" height="1" fill="#000"/><rect x="7" y="9" width="2" height="1" fill="#000"/>
</svg>
<div class="a t" style="left:12px;top:385.03px;font:bold 12px 'Liberation Sans';line-height:12px;color:#0000ff;letter-spacing:-0.02px;">Motivo da Pendência</div>
<div class="a t" style="left:265.5px;top:385.03px;font:bold 12px 'Liberation Sans';line-height:12px;color:#0000ff;letter-spacing:-0.05px;">Responsável Pela Pendência:</div>
<div class="a t" style="left:708px;top:385.03px;font:bold 12px 'Liberation Sans';line-height:12px;color:#0000ff;letter-spacing:-0.18px;">Pendente Em:</div>
<div class="a" style="left:11px;top:398px;width:249px;height:21px;background:#ababab;"></div>
<div class="a" style="left:12px;top:399px;width:247px;height:19px;background:#fff;"></div>
<div class="a" style="left:13px;top:400px;width:245px;height:17px;background:#fff;"></div>
<div class="a" style="left:241px;top:400px;width:17px;height:17px;background:#adadad;"></div>
<div class="a" style="left:242px;top:401px;width:15px;height:15px;background:#dddddd;"></div>
<svg class="a" style="left:245px;top:406px" width="8" height="6" viewBox="0 0 8 6"><path d="M0.5 1 L4.0 4.5 L7.5 1" fill="none" stroke="#444" stroke-width="1"/></svg>
<div class="a" style="left:264px;top:398px;width:61px;height:20px;background:#e3e3e3;"></div>
<div class="a" style="left:264px;top:398px;width:60px;height:19px;background:#a0a0a0;"></div>
<div class="a" style="left:265px;top:399px;width:59px;height:18px;background:#f0f0f0;"></div>
<div class="a" style="left:265px;top:399px;width:58px;height:17px;background:#696969;"></div>
<div class="a" style="left:266px;top:400px;width:57px;height:16px;background:#fff;"></div>
<div class="a" style="left:307px;top:400px;width:16px;height:16px;background:#696969;"></div>
<div class="a" style="left:307px;top:400px;width:15px;height:15px;background:#fff;"></div>
<div class="a" style="left:308px;top:401px;width:14px;height:14px;background:#a0a0a0;"></div>
<div class="a" style="left:308px;top:401px;width:13px;height:13px;background:#f0f0f0;"></div>
<svg class="a" style="left:310.5px;top:407px" width="8" height="5" viewBox="0 0 8 5"><path d="M0 0 H8 L4 4.5 Z" fill="#000"/></svg>
<div class="a" style="left:326px;top:398px;width:374px;height:21px;background:#ababab;"></div>
<div class="a" style="left:327px;top:399px;width:372px;height:19px;background:#fff;"></div>
<div class="a" style="left:328px;top:400px;width:370px;height:17px;background:#fff;"></div>
<div class="a" style="left:681px;top:400px;width:17px;height:17px;background:#adadad;"></div>
<div class="a" style="left:682px;top:401px;width:15px;height:15px;background:#dddddd;"></div>
<svg class="a" style="left:685px;top:406px" width="8" height="6" viewBox="0 0 8 6"><path d="M0.5 1 L4.0 4.5 L7.5 1" fill="none" stroke="#444" stroke-width="1"/></svg>
<div class="a" style="left:706px;top:398px;width:185px;height:21px;background:#7a7a7a;"></div>
<div class="a" style="left:707px;top:399px;width:183px;height:19px;background:#fff;"></div>
<div class="a" style="left:708px;top:400px;width:181px;height:17px;background:#fff;"></div>
<div class="a" style="left:872px;top:400px;width:17px;height:17px;background:#696969;"></div>
<div class="a" style="left:872px;top:400px;width:16px;height:16px;background:#fff;"></div>
<div class="a" style="left:873px;top:401px;width:15px;height:15px;background:#a0a0a0;"></div>
<div class="a" style="left:873px;top:401px;width:14px;height:14px;background:#f0f0f0;"></div>
<svg class="a" style="left:875px;top:403px" width="11" height="11" viewBox="0 0 11 11" shape-rendering="crispEdges">
<rect x="0" y="0" width="11" height="11" fill="#808000"/>
<rect x="0" y="0" width="11" height="4" fill="#0000ff"/>
<rect x="1" y="1" width="9" height="1" fill="#fff"/>
<rect x="1" y="4" width="9" height="6" fill="#fff"/>
<rect x="1" y="5" width="2" height="1" fill="#000"/><rect x="4" y="5" width="2" height="1" fill="#000"/><rect x="7" y="5" width="2" height="1" fill="#000"/>
<rect x="1" y="7" width="2" height="1" fill="#000"/><rect x="4" y="7" width="2" height="1" fill="#f00"/><rect x="7" y="7" width="2" height="1" fill="#f00"/>
<rect x="1" y="9" width="2" height="1" fill="#000"/><rect x="4" y="9" width="2" height="1" fill="#000"/><rect x="7" y="9" width="2" height="1" fill="#000"/>
</svg>
<div class="a t" style="left:12px;top:424.03px;font:bold 12px 'Liberation Sans';line-height:12px;color:#0000ff;letter-spacing:-0.04px;">Detalhamento da Pendência:</div>
<div class="a" style="left:8px;top:458px;width:1px;height:42px;background:#a0a0a0;"></div>
<div class="a" style="left:8px;top:458px;width:3px;height:1px;background:#a0a0a0;"></div>
<svg class="a" style="left:14px;top:461px" width="13" height="13" viewBox="0 0 13 13"><rect x="0.5" y="0.5" width="12" height="12" fill="#fff" stroke="#333"/><rect x="3" y="3" width="7" height="7" fill="#333"/></svg>
<div class="a t" style="left:30.5px;top:462.03px;font:bold 12px 'Liberation Sans';line-height:12px;color:#000;letter-spacing:-0.11px;">Listar Todos Responsáveis</div>
<div class="a t" style="left:14.5px;top:487.03px;font:bold 12px 'Liberation Sans';line-height:12px;color:#0000ff;letter-spacing:-0.22px;">Entre Equipes</div>
<div class="a t" style="left:111px;top:477.53px;font:bold 12px 'Liberation Sans';line-height:12px;color:#0000ff;letter-spacing:0.22px;">Eq. Resp.P/Execução</div>
<div class="a t" style="left:258.5px;top:475.03px;font:bold 12px 'Liberation Sans';line-height:12px;color:#0000ff;letter-spacing:0.06px;">Responsável P/Execução</div>
<div class="a t" style="left:473.5px;top:475.03px;font:bold 12px 'Liberation Sans';line-height:12px;color:#0000ff;letter-spacing:-0.31px;">Executado Em:</div>
<div class="a t" style="left:564.5px;top:475.03px;font:bold 12px 'Liberation Sans';line-height:12px;color:#0000ff;letter-spacing:-0.3px;">Baixada Em:</div>
<div class="a t" style="left:644.5px;top:475.03px;font:bold 12px 'Liberation Sans';line-height:12px;color:#0000ff;letter-spacing:-0.06px;">Hora Inicial:</div>
<div class="a t" style="left:719.5px;top:475.03px;font:bold 12px 'Liberation Sans';line-height:12px;color:#0000ff;letter-spacing:-0.17px;">Hora Final:</div>
<div class="a t" style="left:785.5px;top:475.03px;font:bold 12px 'Liberation Sans';line-height:12px;color:#0000ff;letter-spacing:-0.15px;">Situação</div>
<div class="a" style="left:111px;top:490px;width:143px;height:21px;background:#ababab;"></div>
<div class="a" style="left:112px;top:491px;width:141px;height:19px;background:#fff;"></div>
<div class="a" style="left:113px;top:492px;width:139px;height:17px;background:#fff;"></div>
<div class="a" style="left:235px;top:492px;width:17px;height:17px;background:#adadad;"></div>
<div class="a" style="left:236px;top:493px;width:15px;height:15px;background:#dddddd;"></div>
<svg class="a" style="left:239px;top:498px" width="8" height="6" viewBox="0 0 8 6"><path d="M0.5 1 L4.0 4.5 L7.5 1" fill="none" stroke="#444" stroke-width="1"/></svg>
<div class="a" style="left:258px;top:490px;width:49px;height:20px;background:#e3e3e3;"></div>
<div class="a" style="left:258px;top:490px;width:48px;height:19px;background:#a0a0a0;"></div>
<div class="a" style="left:259px;top:491px;width:47px;height:18px;background:#f0f0f0;"></div>
<div class="a" style="left:259px;top:491px;width:46px;height:17px;background:#696969;"></div>
<div class="a" style="left:260px;top:492px;width:45px;height:16px;background:#fff;"></div>
<div class="a" style="left:289px;top:492px;width:16px;height:16px;background:#696969;"></div>
<div class="a" style="left:289px;top:492px;width:15px;height:15px;background:#fff;"></div>
<div class="a" style="left:290px;top:493px;width:14px;height:14px;background:#a0a0a0;"></div>
<div class="a" style="left:290px;top:493px;width:13px;height:13px;background:#f0f0f0;"></div>
<svg class="a" style="left:292.5px;top:499px" width="8" height="5" viewBox="0 0 8 5"><path d="M0 0 H8 L4 4.5 Z" fill="#000"/></svg>
<div class="a" style="left:309px;top:490px;width:160px;height:21px;background:#ababab;"></div>
<div class="a" style="left:310px;top:491px;width:158px;height:19px;background:#fff;"></div>
<div class="a" style="left:311px;top:492px;width:156px;height:17px;background:#fff;"></div>
<div class="a" style="left:450px;top:492px;width:17px;height:17px;background:#adadad;"></div>
<div class="a" style="left:451px;top:493px;width:15px;height:15px;background:#dddddd;"></div>
<svg class="a" style="left:454px;top:498px" width="8" height="6" viewBox="0 0 8 6"><path d="M0.5 1 L4.0 4.5 L7.5 1" fill="none" stroke="#444" stroke-width="1"/></svg>
<div class="a" style="left:473px;top:490px;width:86px;height:21px;background:#7a7a7a;"></div>
<div class="a" style="left:474px;top:491px;width:84px;height:19px;background:#fff;"></div>
<div class="a" style="left:475px;top:492px;width:82px;height:17px;background:#fff;"></div>
<div class="a" style="left:540px;top:492px;width:17px;height:17px;background:#696969;"></div>
<div class="a" style="left:540px;top:492px;width:16px;height:16px;background:#fff;"></div>
<div class="a" style="left:541px;top:493px;width:15px;height:15px;background:#a0a0a0;"></div>
<div class="a" style="left:541px;top:493px;width:14px;height:14px;background:#f0f0f0;"></div>
<svg class="a" style="left:543px;top:495px" width="11" height="11" viewBox="0 0 11 11" shape-rendering="crispEdges">
<rect x="0" y="0" width="11" height="11" fill="#808000"/>
<rect x="0" y="0" width="11" height="4" fill="#0000ff"/>
<rect x="1" y="1" width="9" height="1" fill="#fff"/>
<rect x="1" y="4" width="9" height="6" fill="#fff"/>
<rect x="1" y="5" width="2" height="1" fill="#000"/><rect x="4" y="5" width="2" height="1" fill="#000"/><rect x="7" y="5" width="2" height="1" fill="#000"/>
<rect x="1" y="7" width="2" height="1" fill="#000"/><rect x="4" y="7" width="2" height="1" fill="#f00"/><rect x="7" y="7" width="2" height="1" fill="#f00"/>
<rect x="1" y="9" width="2" height="1" fill="#000"/><rect x="4" y="9" width="2" height="1" fill="#000"/><rect x="7" y="9" width="2" height="1" fill="#000"/>
</svg>
<div class="a" style="left:564px;top:490px;width:75px;height:21px;background:#7a7a7a;"></div>
<div class="a" style="left:565px;top:491px;width:73px;height:19px;background:#fff;"></div>
<div class="a" style="left:566px;top:492px;width:71px;height:17px;background:#00ffff;"></div>
<div class="a" style="left:644px;top:490px;width:70px;height:21px;background:#7a7a7a;"></div>
<div class="a" style="left:645px;top:491px;width:68px;height:19px;background:#fff;"></div>
<div class="a" style="left:646px;top:492px;width:66px;height:17px;background:#fff;"></div>
<div class="a t" style="left:654px;top:494.03px;font:12px 'Liberation Sans';line-height:12px;color:#000;">:</div>
<div class="a" style="left:719px;top:490px;width:62px;height:21px;background:#7a7a7a;"></div>
<div class="a" style="left:720px;top:491px;width:60px;height:19px;background:#fff;"></div>
<div class="a" style="left:721px;top:492px;width:58px;height:17px;background:#fff;"></div>
<div class="a t" style="left:729px;top:494.03px;font:12px 'Liberation Sans';line-height:12px;color:#000;">:</div>
<div class="a" style="left:785px;top:490px;width:106px;height:21px;background:#7a7a7a;"></div>
<div class="a" style="left:786px;top:491px;width:104px;height:19px;background:#fff;"></div>
<svg class="a" style="left:877px;top:497.5px" width="8" height="6" viewBox="0 0 8 6"><path d="M0.5 1 L4.0 4.5 L7.5 1" fill="none" stroke="#333" stroke-width="1"/></svg>
<div class="a t" style="left:789px;top:495.03px;font:bold 12px 'Liberation Sans';line-height:12px;color:#0000ff;letter-spacing:-0.27px;">RECEBIDA</div>
<div class="a t" style="left:11.5px;top:516.03px;font:bold 12px 'Liberation Sans';line-height:12px;color:#0000ff;letter-spacing:-0.05px;">Detalhamento da Execução</div>
<div class="a t" style="left:564.5px;top:516.03px;font:bold 12px 'Liberation Sans';line-height:12px;color:#0000ff;letter-spacing:0.08px;">Últ. Alteração</div>
<div class="a t" style="left:661px;top:516.03px;font:bold 12px 'Liberation Sans';line-height:12px;color:#0000ff;letter-spacing:-0.08px;">Responsável Pela Última Alteração</div>
<div class="a" style="left:564px;top:530px;width:93px;height:21px;background:#7a7a7a;"></div>
<div class="a" style="left:565px;top:531px;width:91px;height:19px;background:#fff;"></div>
<div class="a" style="left:566px;top:532px;width:89px;height:17px;background:#fff;"></div>
<div class="a" style="left:638px;top:532px;width:17px;height:17px;background:#696969;"></div>
<div class="a" style="left:638px;top:532px;width:16px;height:16px;background:#fff;"></div>
<div class="a" style="left:639px;top:533px;width:15px;height:15px;background:#a0a0a0;"></div>
<div class="a" style="left:639px;top:533px;width:14px;height:14px;background:#f0f0f0;"></div>
<svg class="a" style="left:641px;top:535px" width="11" height="11" viewBox="0 0 11 11" shape-rendering="crispEdges">
<rect x="0" y="0" width="11" height="11" fill="#808000"/>
<rect x="0" y="0" width="11" height="4" fill="#0000ff"/>
<rect x="1" y="1" width="9" height="1" fill="#fff"/>
<rect x="1" y="4" width="9" height="6" fill="#fff"/>
<rect x="1" y="5" width="2" height="1" fill="#000"/><rect x="4" y="5" width="2" height="1" fill="#000"/><rect x="7" y="5" width="2" height="1" fill="#000"/>
<rect x="1" y="7" width="2" height="1" fill="#000"/><rect x="4" y="7" width="2" height="1" fill="#f00"/><rect x="7" y="7" width="2" height="1" fill="#f00"/>
<rect x="1" y="9" width="2" height="1" fill="#000"/><rect x="4" y="9" width="2" height="1" fill="#000"/><rect x="7" y="9" width="2" height="1" fill="#000"/>
</svg>
<div class="a" style="left:663px;top:530px;width:229px;height:21px;background:#ababab;"></div>
<div class="a" style="left:664px;top:531px;width:227px;height:19px;background:#fff;"></div>
<div class="a" style="left:665px;top:532px;width:225px;height:17px;background:#fff;"></div>
<div class="a" style="left:873px;top:532px;width:17px;height:17px;background:#adadad;"></div>
<div class="a" style="left:874px;top:533px;width:15px;height:15px;background:#dddddd;"></div>
<svg class="a" style="left:877px;top:538px" width="8" height="6" viewBox="0 0 8 6"><path d="M0.5 1 L4.0 4.5 L7.5 1" fill="none" stroke="#444" stroke-width="1"/></svg>
<div class="a t" style="left:564.5px;top:558.03px;font:bold 12px 'Liberation Sans';line-height:12px;color:#0000ff;letter-spacing:0.2px;">Data Prevista P/ Execução</div>
<div class="a" style="left:564px;top:572px;width:156px;height:21px;background:#7a7a7a;"></div>
<div class="a" style="left:565px;top:573px;width:154px;height:19px;background:#fff;"></div>
<div class="a" style="left:566px;top:574px;width:152px;height:17px;background:#fff;"></div>
<div class="a" style="left:701px;top:574px;width:17px;height:17px;background:#696969;"></div>
<div class="a" style="left:701px;top:574px;width:16px;height:16px;background:#fff;"></div>
<div class="a" style="left:702px;top:575px;width:15px;height:15px;background:#a0a0a0;"></div>
<div class="a" style="left:702px;top:575px;width:14px;height:14px;background:#f0f0f0;"></div>
<svg class="a" style="left:704px;top:577px" width="11" height="11" viewBox="0 0 11 11" shape-rendering="crispEdges">
<rect x="0" y="0" width="11" height="11" fill="#808000"/>
<rect x="0" y="0" width="11" height="4" fill="#0000ff"/>
<rect x="1" y="1" width="9" height="1" fill="#fff"/>
<rect x="1" y="4" width="9" height="6" fill="#fff"/>
<rect x="1" y="5" width="2" height="1" fill="#000"/><rect x="4" y="5" width="2" height="1" fill="#000"/><rect x="7" y="5" width="2" height="1" fill="#000"/>
<rect x="1" y="7" width="2" height="1" fill="#000"/><rect x="4" y="7" width="2" height="1" fill="#f00"/><rect x="7" y="7" width="2" height="1" fill="#f00"/>
<rect x="1" y="9" width="2" height="1" fill="#000"/><rect x="4" y="9" width="2" height="1" fill="#000"/><rect x="7" y="9" width="2" height="1" fill="#000"/>
</svg>
<div class="a" style="left:3px;top:580px;width:1148px;height:3px;background:#fff;"></div>
<div class="a" style="left:554px;top:579px;width:10px;height:1px;background:#dcdcdc;"></div>
<div class="a" style="left:720px;top:579px;width:431px;height:1px;background:#dcdcdc;"></div>
<div class="a" style="left:6px;top:241px;width:1px;height:339px;background:#e6e6e6;"></div>
<div class="a" style="left:6px;top:579px;width:5px;height:1px;background:#e0e0e0;"></div>
<div class="a" style="left:0px;top:584px;width:1151px;height:44px;background:#f0f0f0;"></div>
<div class="a" style="left:0px;top:584px;width:1px;height:38px;background:#dadada;"></div>
<div class="a" style="left:2px;top:583px;width:1149px;height:1px;background:#dcdcdc;"></div>
<div class="a" style="left:2px;top:585px;width:1149px;height:1px;background:#dcdcdc;"></div>
<div class="a" style="left:2px;top:585px;width:1px;height:34px;background:#dcdcdc;"></div>
<div class="a" style="left:2px;top:618px;width:1149px;height:1px;background:#dcdcdc;"></div>
<div class="a" style="left:0px;top:621px;width:1151px;height:1px;background:#dcdcdc;"></div>
<div class="a" style="left:139px;top:622px;width:1px;height:6px;background:#dcdcdc;"></div>
<div class="a" style="left:540px;top:622px;width:1px;height:6px;background:#dcdcdc;"></div>
<div class="a" style="left:6px;top:589px;width:97px;height:31px;background:#bfbfbf;"></div>
<div class="a" style="left:7px;top:590px;width:95px;height:29px;background:#cccccc;"></div>
<div class="a t" style="left:51px;top:599.03px;font:bold 12px 'Liberation Sans';line-height:12px;color:#838383;letter-spacing:-0.22px;"><u>I</u>ncluir</div>
<div class="a" style="left:105px;top:589px;width:97px;height:31px;background:#bfbfbf;"></div>
<div class="a" style="left:106px;top:590px;width:95px;height:29px;background:#cccccc;"></div>
<div class="a t" style="left:149px;top:599.03px;font:bold 12px 'Liberation Sans';line-height:12px;color:#838383;letter-spacing:-0.31px;"><u>A</u>lterar</div>
<div class="a" style="left:205px;top:589px;width:96px;height:31px;background:#bfbfbf;"></div>
<div class="a" style="left:206px;top:590px;width:94px;height:29px;background:#cccccc;"></div>
<div class="a t" style="left:248px;top:599.03px;font:bold 12px 'Liberation Sans';line-height:12px;color:#838383;letter-spacing:-0.39px;"><u>E</u>xcluir</div>
<div class="a" style="left:304px;top:589px;width:97px;height:31px;background:#adadad;"></div>
<div class="a" style="left:305px;top:590px;width:95px;height:29px;background:#e1e1e1;"></div>
<svg class="a" style="left:312px;top:592px" width="26" height="26" viewBox="0 0 26 26">
<defs><radialGradient id="rc" cx="0.4" cy="0.3" r="0.75"><stop offset="0" stop-color="#f4603a"/><stop offset="0.6" stop-color="#d2300e"/><stop offset="1" stop-color="#a01800"/></radialGradient></defs>
<circle cx="13" cy="13" r="12" fill="url(#rc)" stroke="#8a1a08" stroke-width="1"/>
<path d="M8.5 8.5 L17.5 17.5 M17.5 8.5 L8.5 17.5" stroke="#fff" stroke-width="3" stroke-linecap="round"/>
</svg>
<div class="a t" style="left:341.5px;top:599.03px;font:bold 12px 'Liberation Sans';line-height:12px;color:#0000ff;letter-spacing:-0.24px;">Ca<u>n</u>celar</div>
<div class="a" style="left:402px;top:589px;width:97px;height:31px;background:#adadad;"></div>
<div class="a" style="left:403px;top:590px;width:95px;height:29px;background:#e1e1e1;"></div>
<svg class="a" style="left:419px;top:594px" width="21" height="22" viewBox="0 0 21 22">
<defs><linearGradient id="fb" x1="0" y1="0" x2="1" y2="0"><stop offset="0" stop-color="#2a2a90"/><stop offset="0.25" stop-color="#5050b8"/><stop offset="0.75" stop-color="#4a4ab0"/><stop offset="1" stop-color="#22228a"/></linearGradient></defs>
<rect x="0" y="0" width="21" height="22" rx="2" fill="url(#fb)"/>
<rect x="3.5" y="0" width="14" height="11.5" fill="#fff"/>
<path d="M6 2.5 H15 M6 5.5 H15 M6 8.5 H15" stroke="#a8a8a8" stroke-width="1"/>
<rect x="6" y="14" width="9" height="7.5" fill="#f0f0f4"/>
<rect x="7.2" y="15" width="3" height="4.8" fill="#10107a"/>
</svg>
<div class="a t" style="left:446.5px;top:599.03px;font:bold 12px 'Liberation Sans';line-height:12px;color:#0000ff;letter-spacing:-0.11px;"><u>S</u>alvar</div>
<div class="a" style="left:501px;top:589px;width:96px;height:31px;background:#bfbfbf;"></div>
<div class="a" style="left:502px;top:590px;width:94px;height:29px;background:#cccccc;"></div>
<div class="a t" style="left:552px;top:599.03px;font:bold 12px 'Liberation Sans';line-height:12px;color:#838383;letter-spacing:0.1px;"><u>S</u>air</div>
<div class="a" style="left:599px;top:589px;width:30px;height:31px;background:#adadad;"></div>
<div class="a" style="left:600px;top:590px;width:28px;height:29px;background:#e1e1e1;"></div>
<svg class="a" style="left:607px;top:599px" width="14" height="11" viewBox="0 0 14 11"><defs><linearGradient id="nb" x1="0" y1="0" x2="0" y2="1"><stop offset="0" stop-color="#3a8ae8"/><stop offset="1" stop-color="#0050c0"/></linearGradient></defs><rect x="1" y="1" width="2" height="8.5" fill="url(#nb)"/><path d="M12 1 L4 5.3 L12 10 Z" fill="url(#nb)"/></svg>
<div class="a" style="left:631px;top:589px;width:30px;height:31px;background:#adadad;"></div>
<div class="a" style="left:632px;top:590px;width:28px;height:29px;background:#e1e1e1;"></div>
<svg class="a" style="left:641px;top:599px" width="10" height="11" viewBox="0 0 10 11"><path d="M9 1 L0.5 5.3 L9 10 Z" fill="url(#nb)"/></svg>
<div class="a" style="left:663px;top:589px;width:30px;height:31px;background:#bfbfbf;"></div>
<div class="a" style="left:664px;top:590px;width:28px;height:29px;background:#cccccc;"></div>
<svg class="a" style="left:675px;top:599px" width="10" height="11" viewBox="0 0 10 11"><path d="M0.5 1 L8.5 5.3 L0.5 10 Z" fill="#8e8e8e"/></svg>
<div class="a" style="left:695px;top:589px;width:30px;height:31px;background:#bfbfbf;"></div>
<div class="a" style="left:696px;top:590px;width:28px;height:29px;background:#cccccc;"></div>
<svg class="a" style="left:705px;top:599px" width="13" height="11" viewBox="0 0 13 11"><path d="M0.5 1 L8.5 5.3 L0.5 10 Z" fill="#8e8e8e"/><rect x="9.5" y="1" width="1.6" height="8.5" fill="#8e8e8e"/></svg>
<div class="a" style="left:727px;top:589px;width:30px;height:31px;background:#adadad;"></div>
<div class="a" style="left:728px;top:590px;width:28px;height:29px;background:#e1e1e1;"></div>
<svg class="a" style="left:736px;top:599px" width="12" height="12" viewBox="0 0 12 12"><path d="M5 10.5 C2 8.5 0.8 5.5 2.3 3 C4 0.6 7 0.6 8.6 3" fill="none" stroke="#0a6ad0" stroke-width="2.1"/><path d="M10.8 1 L10.8 5.8 L6 5.8 Z" fill="#0a6ad0"/></svg>
<div class="a" style="left:765px;top:589px;width:133px;height:31px;background:#adadad;"></div>
<div class="a" style="left:766px;top:590px;width:131px;height:29px;background:#e1e1e1;"></div>
<svg class="a" style="left:770px;top:594px" width="24" height="23" viewBox="0 0 24 23">
<path d="M2 2 L22 21" stroke="#e00000" stroke-width="3.2" stroke-linecap="butt"/>
<path d="M19.5 4.5 L4 19" stroke="#c80000" stroke-width="3" stroke-linecap="butt"/>
<path d="M12 11 L22 21" stroke="#c00000" stroke-width="2.6"/>
</svg>
<div class="a t" style="left:799px;top:599.03px;font:bold 12px 'Liberation Sans';line-height:12px;color:#0000ff;letter-spacing:-0.05px;">Excluir - Período</div>
<div class="a" style="left:904px;top:589px;width:88px;height:31px;background:#bfbfbf;"></div>
<div class="a" style="left:905px;top:590px;width:86px;height:29px;background:#cccccc;"></div>
<div class="a t" style="left:946.5px;top:599.03px;font:bold 12px 'Liberation Sans';line-height:12px;color:#838383;letter-spacing:-0.54px;">Fotos</div>
</body></html>
